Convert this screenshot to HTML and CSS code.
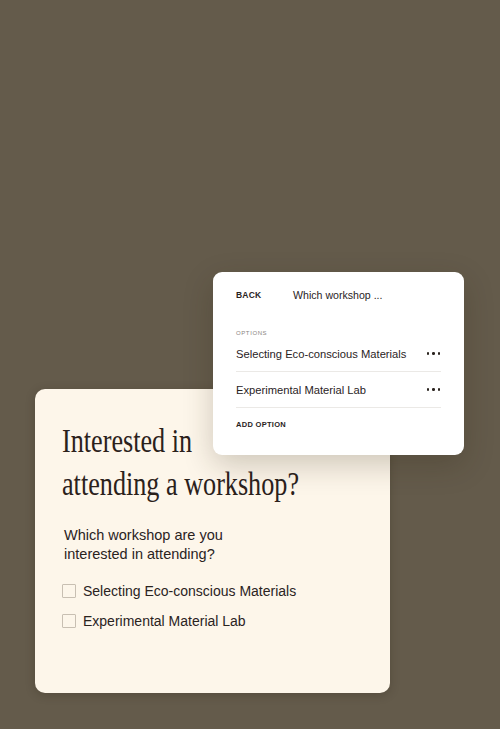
FILE: index.html
```html
<!DOCTYPE html>
<html>
<head>
<meta charset="utf-8">
<link rel="stylesheet" href="styles.css">
</head>
<body>
<div class="stage">
  <div class="form-card">
    <h1 class="title"><span class="title-line">Interested in</span><span class="title-line">attending a workshop?</span></h1>
    <p class="question">Which workshop are you<br>interested in attending?</p>
    <ul class="choices">
      <li class="choice"><span class="box"></span>Selecting Eco-conscious Materials</li>
      <li class="choice"><span class="box"></span>Experimental Material Lab</li>
    </ul>
  </div>
  <div class="editor">
    <div class="editor-head">
      <span class="back">BACK</span>
      <span class="editor-title">Which workshop ...</span>
    </div>
    <div class="label">OPTIONS</div>
    <div class="option"><span>Selecting Eco-conscious Materials</span><span class="dots"><i></i><i></i><i></i></span></div>
    <div class="option"><span>Experimental Material Lab</span><span class="dots"><i></i><i></i><i></i></span></div>
    <div class="add">ADD OPTION</div>
  </div>
</div>
</body>
</html>
```
FILE: styles.css
```css
html, body {
  margin: 0;
  padding: 0;
  background: #645b4b;
}
.stage {
  position: relative;
  width: 500px;
  height: 729px;
  padding-top: 389px;
  box-sizing: border-box;
  font-family: "Liberation Sans", Arial, sans-serif;
  color: #2a231e;
}
.form-card {
  margin-left: 35px;
  width: 355px;
  height: 304px;
  box-sizing: border-box;
  background: #fdf6ea;
  border-radius: 10px;
  padding: 30px 27px 0 27px;
  box-shadow: 0 2px 10px rgba(40, 32, 20, 0.25);
}
.title {
  margin: 0;
  font-family: "Liberation Serif", serif;
  font-weight: normal;
  font-size: 34px;
  line-height: 43px;
  color: #2b211b;
  transform: scaleX(0.77);
  transform-origin: left top;
  white-space: nowrap;
}
.title-line {
  display: block;
}
.question {
  margin: 21px 0 0 2px;
  font-size: 14.5px;
  line-height: 19px;
  color: #2a231e;
}
.choices {
  list-style: none;
  margin: 12px 0 0 0;
  padding: 0;
}
.choice {
  display: flex;
  align-items: center;
  height: 30px;
  font-size: 14px;
  color: #2a231e;
}
.box {
  width: 12px;
  height: 12px;
  border: 1px solid #c8bfb2;
  margin-right: 7px;
  border-radius: 1px;
}
.editor {
  position: absolute;
  left: 213px;
  top: 272px;
  width: 251px;
  height: 183px;
  box-sizing: border-box;
  background: #ffffff;
  border-radius: 9px;
  padding: 16px 23px 0 23px;
  box-shadow: 0 10px 30px rgba(40, 30, 15, 0.22);
}
.editor-head {
  display: flex;
  align-items: center;
  height: 14px;
}
.back {
  font-size: 8.5px;
  font-weight: 700;
  letter-spacing: 0.2px;
  width: 57px;
}
.editor-title {
  font-size: 10.6px;
}
.label {
  margin-top: 28px;
  font-size: 6px;
  letter-spacing: 0.6px;
  color: #8a8580;
}
.option {
  display: flex;
  justify-content: space-between;
  align-items: center;
  height: 35px;
  border-bottom: 1px solid #ebe9e6;
  font-size: 11.2px;
}
.option:first-of-type {
  height: 31px;
}
.dots {
  display: flex;
  gap: 3px;
  padding-right: 1px;
}
.dots i {
  width: 2.5px;
  height: 2.5px;
  border-radius: 50%;
  background: #2a231e;
}
.add {
  margin-top: 12px;
  font-size: 7.5px;
  font-weight: 700;
  letter-spacing: 0.3px;
}
```
